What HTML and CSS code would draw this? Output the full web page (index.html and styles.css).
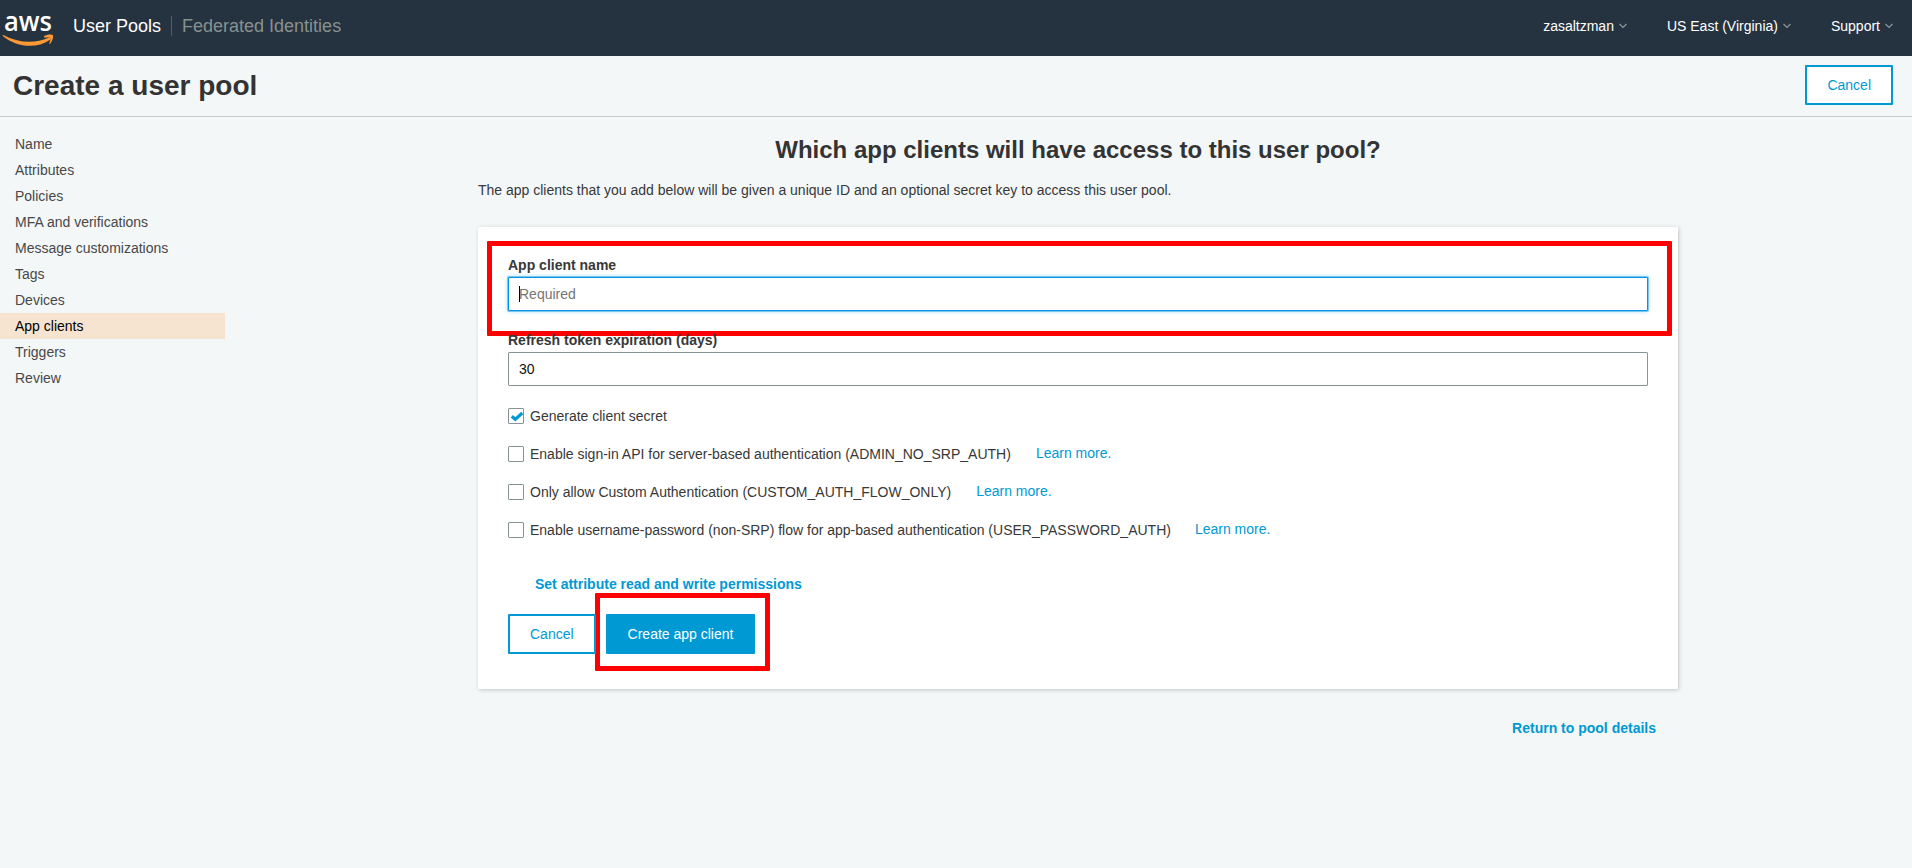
FILE: index.html
```html
<!DOCTYPE html>
<html lang="en">
<head>
<meta charset="utf-8">
<title>Create a user pool</title>
<link rel="stylesheet" href="styles.css">
</head>
<body>
<header class="topbar">
  <svg class="logo" width="56" height="56" viewBox="0 0 56 56">
    <text class="logo-text" x="4" y="31.200" textLength="48" lengthAdjust="spacingAndGlyphs">aws</text>
    <path d="M3.300 35C18 43.200 35 43.800 48.600 37.800c1.800-.8 2.900.9 1.200 2.200C36.500 49 17 47.500 3.100 36.200c-.6-.6-.5-1.500.2-1.200z" fill="#f93"/>
    <path d="M44.100 36.200c2.600-2 7.700-2.200 8.700-1.100.9 1.100-.3 6.500-2.800 8.700-.5.4-1 .2-.8-.3.600-1.500 1.700-4.800 1.100-5.600-.6-.8-4.200-.5-5.700-.3-.6.100-1.100-.9-.5-1.400z" fill="#f93"/>
  </svg>
  <nav class="sections">
    <a class="section current">User Pools</a>
    <a class="section">Federated Identities</a>
  </nav>
  <div class="menus">
    <a class="menu">zasaltzman<svg class="chevron" width="8" height="6" viewBox="0 0 8 6"><path d="M.5 1 4 4.500 7.500 1"/></svg></a>
    <a class="menu">US East (Virginia)<svg class="chevron" width="8" height="6" viewBox="0 0 8 6"><path d="M.5 1 4 4.500 7.500 1"/></svg></a>
    <a class="menu">Support<svg class="chevron" width="8" height="6" viewBox="0 0 8 6"><path d="M.5 1 4 4.500 7.500 1"/></svg></a>
  </div>
</header>
<div class="titlebar">
  <h1 class="title">Create a user pool</h1>
  <button class="btn">Cancel</button>
</div>
<div class="layout">
  <nav class="steps">
    <a class="step">Name</a>
    <a class="step">Attributes</a>
    <a class="step">Policies</a>
    <a class="step">MFA and verifications</a>
    <a class="step">Message customizations</a>
    <a class="step">Tags</a>
    <a class="step">Devices</a>
    <a class="step active">App clients</a>
    <a class="step">Triggers</a>
    <a class="step">Review</a>
  </nav>
  <main class="content">
    <h2 class="heading">Which app clients will have access to this user pool?</h2>
    <p class="intro">The app clients that you add below will be given a unique ID and an optional secret key to access this user pool.</p>
    <section class="card">
      <div class="field">
        <span class="mark mark-name"></span>
        <label class="label">App client name</label>
        <div class="input focused"><span class="caret"></span><span class="placeholder">Required</span></div>
      </div>
      <div class="field">
        <label class="label">Refresh token expiration (days)</label>
        <div class="input">30</div>
      </div>
      <div class="checks">
        <div class="check"><span class="box"><svg width="14" height="14" viewBox="0 0 14 14"><path d="M2.800 7.200 6.300 10.400 13.300 4" fill="none" stroke="#0099d3" stroke-width="3.200"/></svg></span>Generate client secret</div>
        <div class="check"><span class="box"></span>Enable sign-in API for server-based authentication (ADMIN_NO_SRP_AUTH)<a class="more">Learn more.</a></div>
        <div class="check"><span class="box"></span>Only allow Custom Authentication (CUSTOM_AUTH_FLOW_ONLY)<a class="more">Learn more.</a></div>
        <div class="check"><span class="box"></span>Enable username-password (non-SRP) flow for app-based authentication (USER_PASSWORD_AUTH)<a class="more last">Learn more.</a></div>
      </div>
      <a class="strong-link permissions">Set attribute read and write permissions</a>
      <div class="actions">
        <button class="btn">Cancel</button>
        <div class="create"><span class="mark mark-create"></span><button class="btn primary">Create app client</button></div>
      </div>
    </section>
    <a class="strong-link return">Return to pool details</a>
  </main>
</div>
</body>
</html>
```

FILE: styles.css
```css
* { box-sizing: border-box; }
body {
  margin: 0;
  height: 868px;
  overflow: hidden;
  background: #f3f7f8;
  color: #383838;
  font: 14px/20px "Liberation Sans", Arial, sans-serif;
}

/* Top navigation */
.topbar {
  display: flex;
  height: 56px;
  padding-right: 19px;
  background: #253340;
}
.logo { margin-right: 17px; }
.logo-text { font: 600 26.5px "Open Sans", sans-serif; fill: #fff; }
.sections { display: flex; align-items: flex-start; padding-top: 16px; font-size: 18px; }
.section { color: #879190; line-height: 20px; }
.section.current {
  margin-right: 10px;
  padding-right: 10px;
  border-right: 1px solid #555d66;
  color: #fff;
}
.menus { display: flex; gap: 40px; margin-left: auto; padding-top: 16px; color: #fff; }
.menu { display: flex; align-items: center; height: 20px; }
.chevron { margin-left: 5px; }
.chevron path { fill: none; stroke: #8c9699; stroke-width: 1.2; }

/* Page title */
.titlebar {
  display: flex;
  align-items: center;
  justify-content: space-between;
  height: 61px;
  padding: 0 19px 2px 13px;
  border-bottom: 1px solid #c8cacb;
}
.title { margin: 2px 0 0; color: #333; font-size: 28px; line-height: 34px; }
.btn {
  height: 40px;
  padding: 0 20px;
  border: 2px solid #0099d3;
  border-radius: 1px;
  background: #fff;
  color: #0099d3;
  font: inherit;
}
.btn.primary { background: #0099d3; color: #fff; }

/* Wizard steps */
.layout { display: flex; gap: 253px; }
.steps { width: 225px; padding-top: 14px; }
.step { display: block; height: 26px; padding-left: 15px; color: #484848; line-height: 26px; }
.step.active { background: #f6e3d0; color: #000; }

/* Main column */
.content { display: flex; flex-direction: column; width: 1200px; padding-top: 18px; }
.heading { margin: 0 0 15px; color: #333; font-size: 24px; line-height: 30px; text-align: center; }
.intro { margin: 0 0 27px; }
.card {
  position: relative;
  z-index: 0;
  height: 462px;
  padding: 30px;
  border-radius: 1px;
  background: #fff;
  box-shadow: 1px 1px 4px rgba(0, 0, 0, .2);
}
.field { position: relative; margin-bottom: 21px; }
.label { display: block; height: 20px; font-weight: bold; line-height: 16px; }
.input {
  display: flex;
  align-items: center;
  height: 34px;
  padding: 0 10px;
  border: 1px solid #879596;
  border-radius: 1px;
  background: #fff;
  color: #111;
}
.input.focused { border-color: #0095e5; box-shadow: 0 0 0 1px #7cc4f2, 0 0 5px #9bd2f4; }
.caret { width: 1px; height: 16px; margin-right: -1px; background: #000; }
.placeholder { color: #757575; }

.checks { display: grid; gap: 18px; margin-top: -1px; }
.check { display: flex; align-items: center; height: 20px; }
.box { width: 16px; height: 16px; margin-right: 6px; border: 1px solid #879596; border-radius: 1px; }
.box svg { display: block; }
.more { margin-left: 25px; padding-bottom: 2px; color: #0099d3; }
.more.last { margin-left: 24px; }
.strong-link { color: #0099d3; font-weight: bold; }
.permissions { display: block; width: max-content; margin: 34px 0 20px 27px; }
.actions { display: flex; gap: 10px; }
.create { position: relative; }
.return { align-self: flex-end; margin: 29px 22px 0 0; }

/* Highlight frames around the fields to fill in */
.mark { position: absolute; z-index: -1; border: 5px solid #f00; border-radius: 1px; }
.mark-name { left: -21px; top: -16px; width: 1185px; height: 95px; }
.mark-create { left: -11px; top: -21px; width: 175px; height: 78px; }
```
